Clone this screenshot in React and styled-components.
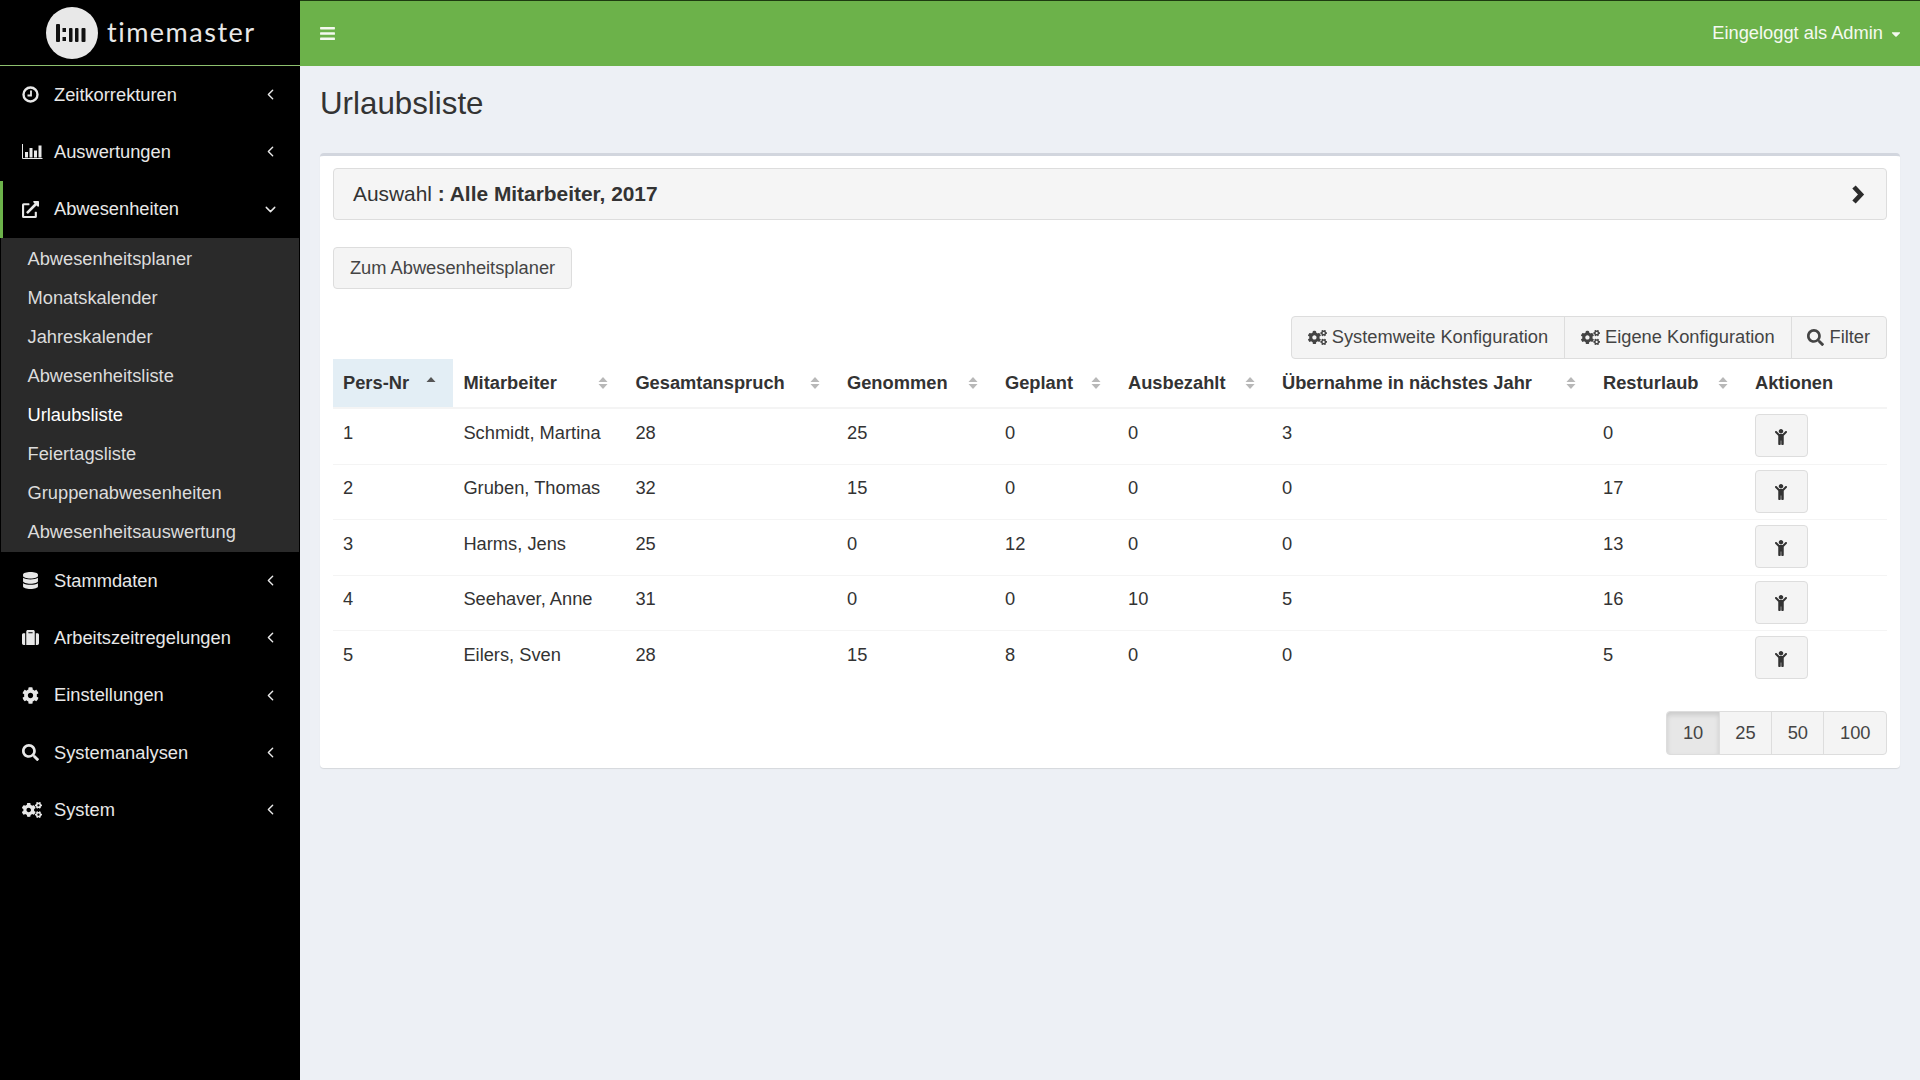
import React from 'react';
import styled, { createGlobalStyle } from 'styled-components';
import { ChevronDown, ChevronLeft } from 'lucide-react';
import {
    FaBars, FaCaretDown, FaChild, FaCog, FaCogs, FaDatabase, FaExternalLinkAlt, FaSearch, FaSuitcase,
} from 'react-icons/fa';

const GlobalStyle = createGlobalStyle`
    html, body {
        margin: 0;
        padding: 0;
        height: 100%;
        background: #edf0f5;
    }
    body {
        font-family: 'Liberation Sans', Arial, sans-serif;
        font-size: 18.3px;
        line-height: 24.5px;
        color: #333;
    }
    * {
        box-sizing: border-box;
    }
`;

const Page = styled.div`
    display: grid;
    grid-template-columns: 300px 1fr;
    min-height: 1080px;
`;

const Sidebar = styled.aside`
    background: #000;
    display: flex;
    flex-direction: column;
`;

const Brand = styled.div`
    height: 66px;
    border-bottom: 1px solid #8dbf6e;
    display: flex;
    align-items: center;
    padding-left: 46px;
    gap: 9px;
`;

const BrandName = styled.span`
    font-family: 'Lato', sans-serif;
    font-size: 27px;
    letter-spacing: 1.5px;
    color: #e8e8e8;
`;

const MenuItem = styled.div`
    height: 57.3px;
    display: flex;
    align-items: center;
    padding-left: ${(p) => (p.$open ? '19px' : '22px')};
    padding-right: 21px;
    color: #e8e8e8;
    border-left: ${(p) => (p.$open ? '3px solid #6cb24a' : 'none')};
`;

const MenuIcon = styled.span`
    width: 32px;
    display: flex;
    align-items: center;
    font-size: 17px;
`;

const MenuLabel = styled.span`
    flex: 1;
    padding-top: 1px;
`;

const SubMenu = styled.div`
    margin: 0 1px 0 1px;
    background: #2a2a2a;
    height: 314px;
    padding-top: 1px;
    display: flex;
    flex-direction: column;
`;

const SubItem = styled.div`
    height: 39px;
    display: flex;
    align-items: center;
    padding: 1px 0 0 26.5px;
    color: ${(p) => (p.$active ? '#fff' : '#dcdcdc')};
`;

const Main = styled.main`
    display: flex;
    flex-direction: column;
`;

const TopBar = styled.header`
    height: 66px;
    border-top: 1px solid #1d3a10;
    background: #6cb24a;
    color: #f4f9f0;
    display: flex;
    align-items: center;
    justify-content: space-between;
    padding: 0 17px 0 19px;
`;

const UserMenu = styled.span`
    display: flex;
    align-items: center;
    gap: 6px;
`;

const Content = styled.section`
    padding: 0 20px 0 20px;
`;

const Title = styled.h1`
    margin: 0;
    height: 87px;
    padding-top: 21px;
    font-size: 31.3px;
    line-height: 34px;
    font-weight: 400;
    color: #333;
`;

const Box = styled.div`
    background: #fff;
    height: 615px;
    border-top: 3px solid #d2d6de;
    border-radius: 4px;
    box-shadow: 0 1px 1px rgba(0, 0, 0, 0.1);
    padding: 12px 13px 0;
`;

const Well = styled.div`
    height: 52px;
    background: #f5f5f5;
    border: 1px solid #ddd;
    border-radius: 4px;
    display: flex;
    align-items: center;
    justify-content: space-between;
    padding: 0 21px 0 19px;
    font-size: 20.9px;
`;

const Button = styled.button`
    font: inherit;
    color: #444;
    background: ${(p) => (p.$active ? '#e7e7e7' : '#f4f4f4')};
    border: 1px solid #ddd;
    border-radius: 4px;
    box-shadow: ${(p) => (p.$active ? 'inset 0 3px 5px rgba(0, 0, 0, 0.125)' : 'none')};
    height: ${(p) => p.$height || '43px'};
    padding: 0 ${(p) => p.$pad || '15.9px'};
    display: inline-flex;
    align-items: center;
    justify-content: center;
    gap: 5px;
`;

const PlannerRow = styled.div`
    margin-top: 27px;
    height: 69px;
`;

const Group = styled.div`
    display: flex;
    justify-content: flex-end;
    ${Button} {
        border-radius: 0;
        margin-left: -1px;
    }
    ${Button}:first-child {
        border-radius: 4px 0 0 4px;
    }
    ${Button}:last-child {
        border-radius: 0 4px 4px 0;
    }
`;

const Table = styled.table`
    width: 100%;
    table-layout: fixed;
    border-collapse: collapse;
`;

const Th = styled.th`
    height: 49px;
    padding: 0 10px;
    text-align: left;
    font-weight: 700;
    background: ${(p) => (p.$sorted ? '#e3eef5' : 'transparent')};
    border-bottom: 2px solid #f4f4f4;
`;

const ThInner = styled.div`
    display: flex;
    align-items: center;
    justify-content: space-between;
    padding-right: 7px;
    white-space: nowrap;
`;

const Td = styled.td`
    height: 55.6px;
    padding: ${(p) => (p.$action ? '5px 10px 6.6px' : '11.5px 10px')};
    vertical-align: top;
    border-bottom: ${(p) => (p.$last ? 'none' : '1px solid #f4f4f4')};
`;

const ChildIcon = styled(FaChild)`
    font-size: 16px;
    color: #333;
    margin-top: 2px;
`;

const Pager = styled(Group)`
    margin-top: 24.5px;
    ${Button} {
        height: 44px;
    }
`;

const MenuAngle = styled(ChevronLeft)`
    width: 17px;
    height: 17px;
    stroke-width: 2;
`;

const subMenu = [
    'Abwesenheitsplaner', 'Monatskalender', 'Jahreskalender', 'Abwesenheitsliste',
    'Urlaubsliste', 'Feiertagsliste', 'Gruppenabwesenheiten', 'Abwesenheitsauswertung',
];
const columns = [
    { label: 'Pers-Nr', width: 120.4, sort: 'asc' },
    { label: 'Mitarbeiter', width: 172, sort: 'both' },
    { label: 'Gesamtanspruch', width: 211.6, sort: 'both' },
    { label: 'Genommen', width: 158, sort: 'both' },
    { label: 'Geplant', width: 123, sort: 'both' },
    { label: 'Ausbezahlt', width: 154, sort: 'both' },
    { label: 'Übernahme in nächstes Jahr', width: 321, sort: 'both' },
    { label: 'Resturlaub', width: 152, sort: 'both' },
    { label: 'Aktionen', width: 142 },
];
const rows = [
    ['1', 'Schmidt, Martina', '28', '25', '0', '0', '3', '0'],
    ['2', 'Gruben, Thomas', '32', '15', '0', '0', '0', '17'],
    ['3', 'Harms, Jens', '25', '0', '12', '0', '0', '13'],
    ['4', 'Seehaver, Anne', '31', '0', '0', '10', '5', '16'],
    ['5', 'Eilers, Sven', '28', '15', '8', '0', '0', '5'],
];

function ClockIcon() {
    return (
        <svg width="17" height="17" viewBox="0 0 17 17">
            <circle cx="8.5" cy="8.5" r="7" fill="none" stroke="currentColor" strokeWidth="2.4" />
            <path d="M9 4.5 V9.5 H5.5" fill="none" stroke="currentColor" strokeWidth="1.8" />
        </svg>
    );
}

function BarsIcon() {
    return (
        <svg width="21" height="17" viewBox="0 0 21 17">
            <path d="M0.5 1 V15.5 H20.5" fill="none" stroke="currentColor" strokeWidth="1" />
            <g fill="currentColor">
                <rect x="3" y="9" width="3" height="5.5" />
                <rect x="7.5" y="5" width="3" height="9.5" />
                <rect x="12" y="7.5" width="3" height="7" />
                <rect x="16.5" y="2.5" width="3" height="12" />
            </g>
        </svg>
    );
}

function WellChevron() {
    return (
        <svg width="14" height="19" viewBox="0 0 14 19">
            <path d="M3 2 L10 9.5 L3 17" fill="none" stroke="#2b2b2b" strokeWidth="4.6" />
        </svg>
    );
}

function SortIcon({ dir }) {
    return (
        <svg width="10" height="14" viewBox="0 0 10 14">
            <path d="M5 1 L9.5 6 H0.5 Z" fill={dir === 'asc' ? '#555' : '#b8b8b8'} />
            {dir !== 'asc' && <path d="M5 13 L9.5 8 H0.5 Z" fill="#b8b8b8" />}
        </svg>
    );
}

function LogoMark() {
    return (
        <svg width="52" height="52" viewBox="0 0 52 52">
            <circle cx="26" cy="26" r="26" fill="#e8e8e8" />
            <g fill="#111">
                <rect x="10" y="17" width="4" height="18" rx="1" />
                <rect x="16.5" y="21" width="3.5" height="4" />
                <rect x="16.5" y="30" width="3.5" height="4" />
                <rect x="23" y="21" width="3.5" height="14" rx="1" />
                <rect x="29" y="21" width="3.5" height="14" rx="1" />
                <rect x="35.5" y="21" width="4" height="14" rx="1" />
            </g>
        </svg>
    );
}

const menuTop = [
    { label: 'Zeitkorrekturen', icon: <ClockIcon /> },
    { label: 'Auswertungen', icon: <BarsIcon /> },
];
const menuBottom = [
    { label: 'Stammdaten', icon: <FaDatabase /> },
    { label: 'Arbeitszeitregelungen', icon: <FaSuitcase /> },
    { label: 'Einstellungen', icon: <FaCog /> },
    { label: 'Systemanalysen', icon: <FaSearch /> },
    { label: 'System', icon: <FaCogs size={20} /> },
];

function NavRow({ item }) {
    return (
        <MenuItem>
            <MenuIcon>{item.icon}</MenuIcon>
            <MenuLabel>{item.label}</MenuLabel>
            <MenuAngle />
        </MenuItem>
    );
}

export default function App() {
    return (
        <Page>
            <GlobalStyle />
            <Sidebar>
                <Brand>
                    <LogoMark />
                    <BrandName>timemaster</BrandName>
                </Brand>
                {menuTop.map((item) => <NavRow key={item.label} item={item} />)}
                <MenuItem $open>
                    <MenuIcon><FaExternalLinkAlt /></MenuIcon>
                    <MenuLabel>Abwesenheiten</MenuLabel>
                    <ChevronDown size={17} strokeWidth={2} />
                </MenuItem>
                <SubMenu>
                    {subMenu.map((label) => (
                        <SubItem key={label} $active={label === 'Urlaubsliste'}>{label}</SubItem>
                    ))}
                </SubMenu>
                {menuBottom.map((item) => <NavRow key={item.label} item={item} />)}
            </Sidebar>
            <Main>
                <TopBar>
                    <FaBars size={17} />
                    <UserMenu>Eingeloggt als Admin <FaCaretDown size={14} /></UserMenu>
                </TopBar>
                <Content>
                    <Title>Urlaubsliste</Title>
                    <Box>
                        <Well>
                            <span>Auswahl <b>: Alle Mitarbeiter, 2017</b></span>
                            <WellChevron />
                        </Well>
                        <PlannerRow>
                            <Button $height="42px">Zum Abwesenheitsplaner</Button>
                        </PlannerRow>
                        <Group>
                            <Button><FaCogs size={19} /> Systemweite Konfiguration</Button>
                            <Button><FaCogs size={19} /> Eigene Konfiguration</Button>
                            <Button><FaSearch size={17} /> Filter</Button>
                        </Group>
                        <Table>
                            <colgroup>
                                {columns.map((c) => <col key={c.label} width={c.width} />)}
                            </colgroup>
                            <thead>
                                <tr>
                                    {columns.map((c) => (
                                        <Th key={c.label} $sorted={c.sort === 'asc'}>
                                            <ThInner>
                                                {c.label}
                                                {c.sort && <SortIcon dir={c.sort} />}
                                            </ThInner>
                                        </Th>
                                    ))}
                                </tr>
                            </thead>
                            <tbody>
                                {rows.map((row, i) => (
                                    <tr key={row[0]}>
                                        {row.map((cell, j) => (
                                            <Td key={j} $last={i === rows.length - 1}>{cell}</Td>
                                        ))}
                                        <Td $action $last={i === rows.length - 1}>
                                            <Button $pad="17.5px"><ChildIcon /></Button>
                                        </Td>
                                    </tr>
                                ))}
                            </tbody>
                        </Table>
                        <Pager>
                            <Button $active $pad="15.5px">10</Button>
                            <Button $pad="15.5px">25</Button>
                            <Button $pad="15.5px">50</Button>
                            <Button $pad="15.5px">100</Button>
                        </Pager>
                    </Box>
                </Content>
            </Main>
        </Page>
    );
}
